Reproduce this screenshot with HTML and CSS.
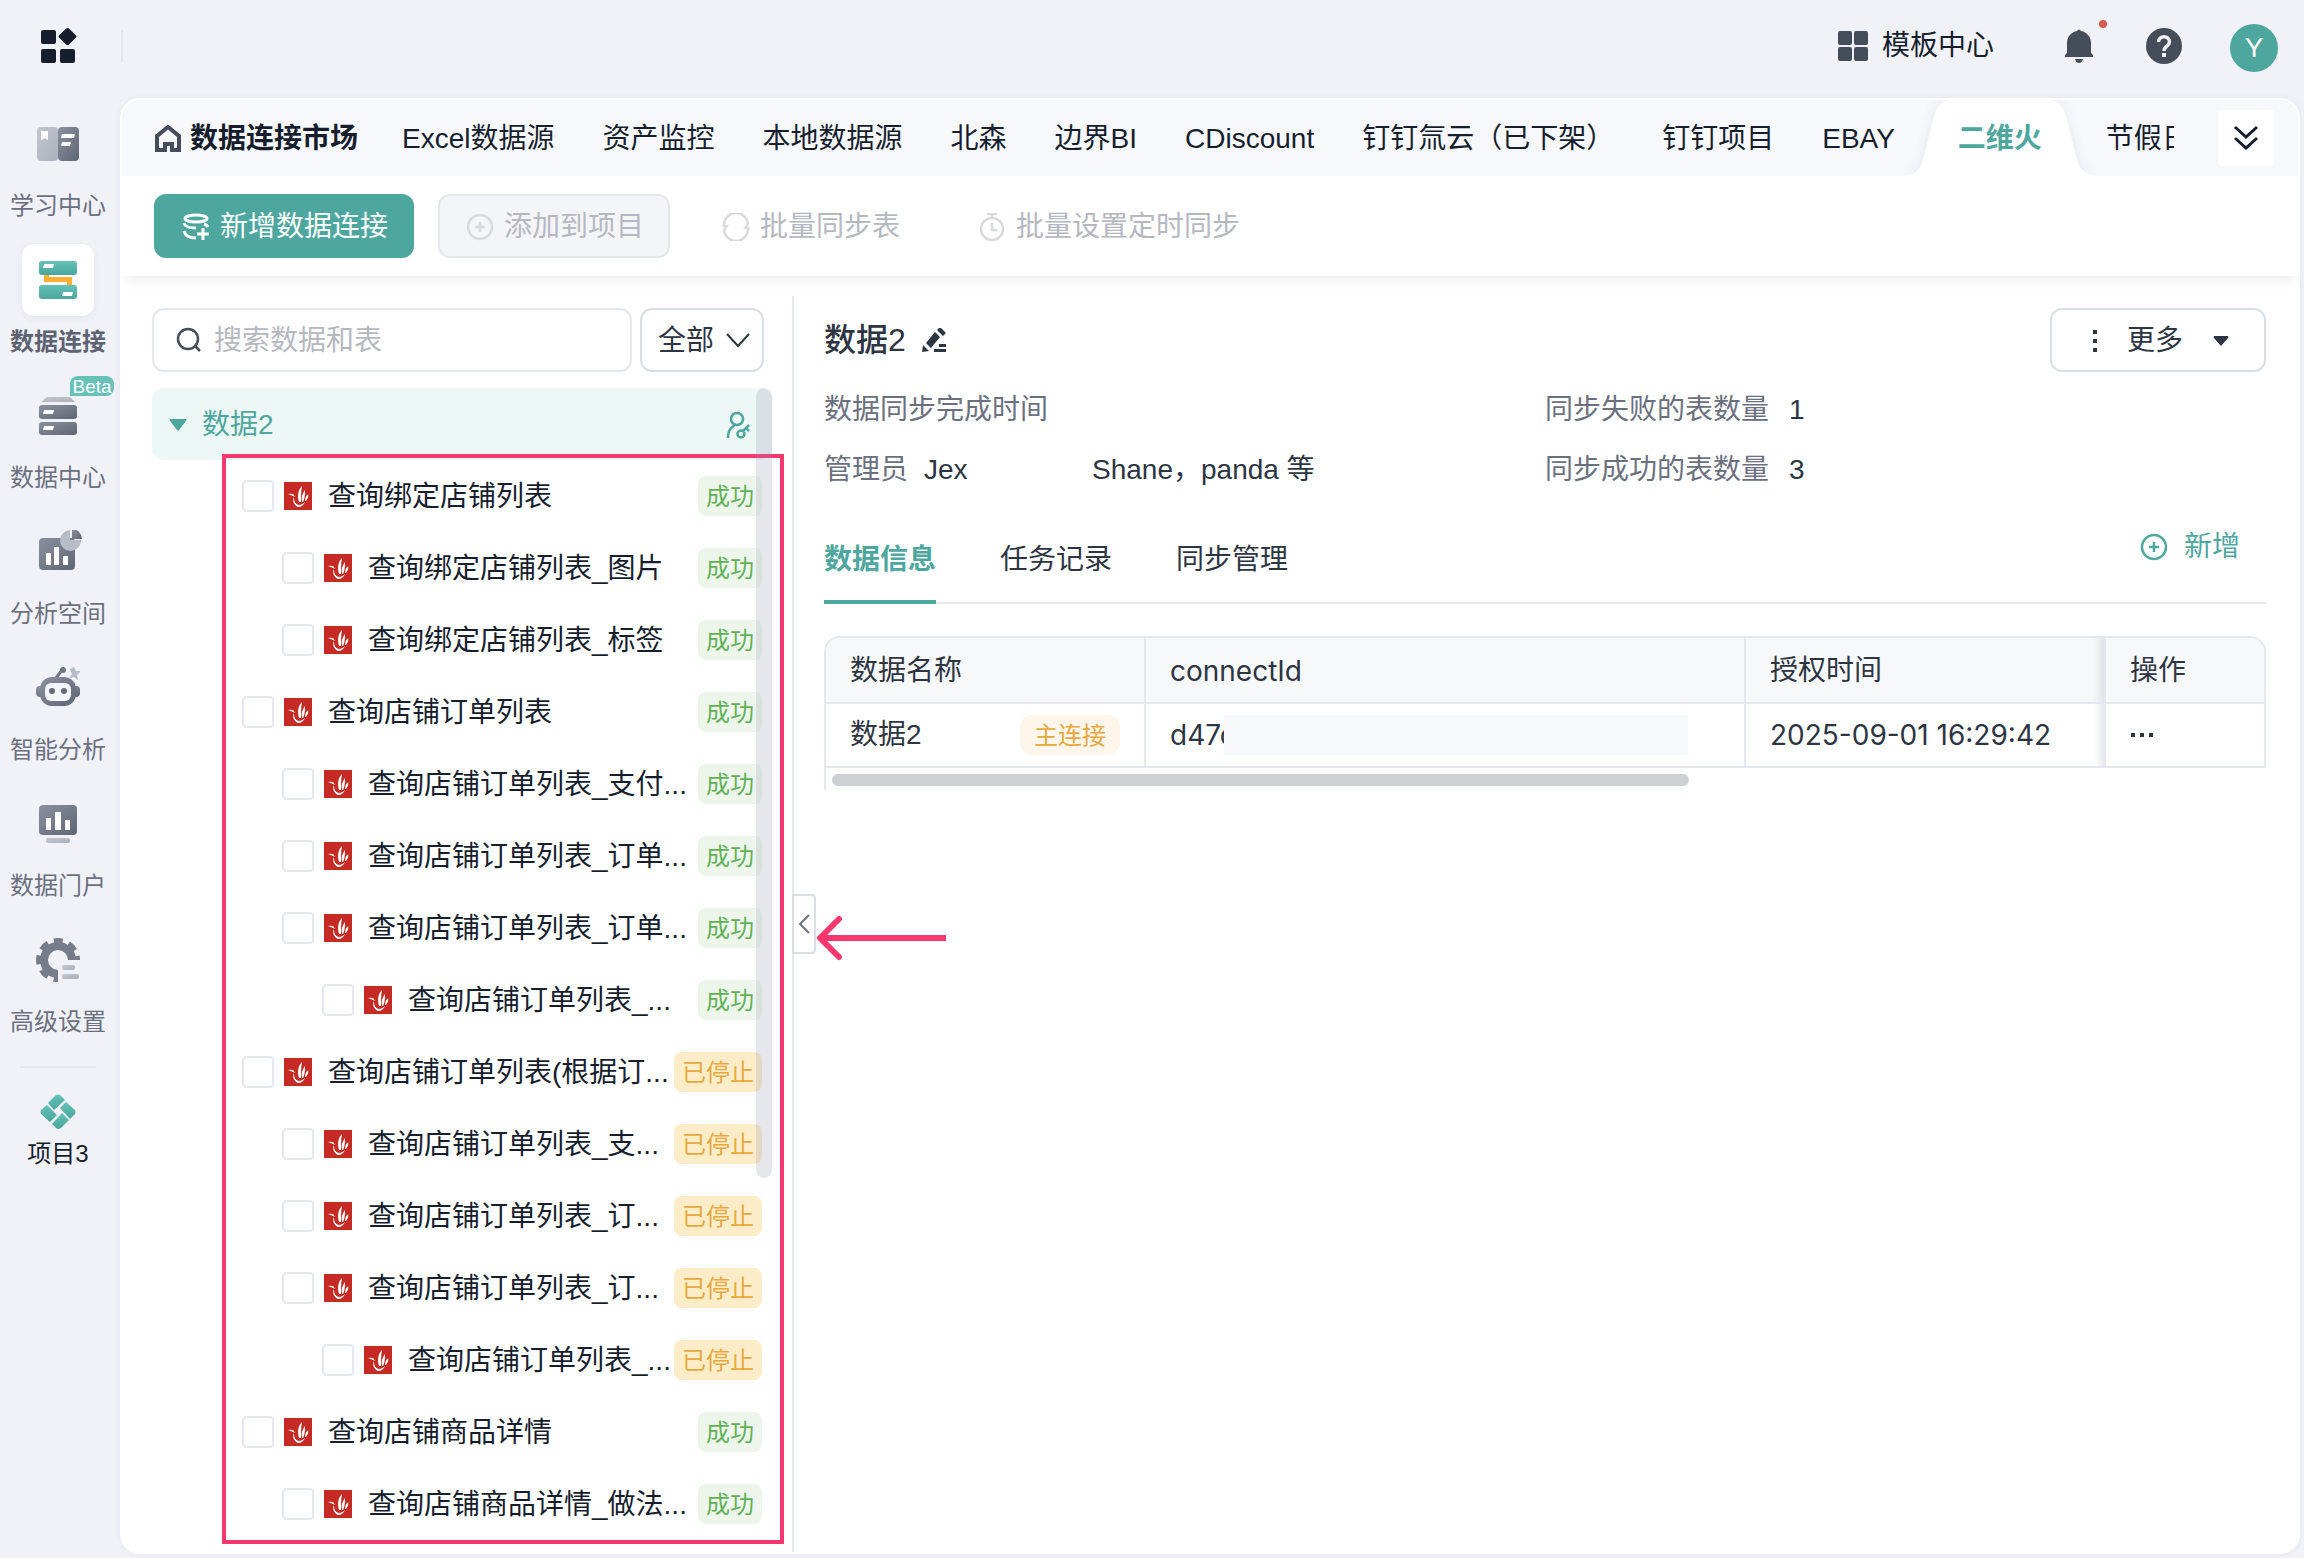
FILE: index.html
```html
<!DOCTYPE html>
<html lang="zh-CN">
<head>
    <meta charset="UTF-8">
    <meta name="viewport" content="width=device-width, initial-scale=1.0">
    <title>数据连接</title>
    <link rel="stylesheet" href="styles.css">
</head>
<body>
    <!-- shared svg parts -->
    <svg class="defs" aria-hidden="true">
        <defs>
            <linearGradient id="dark" x1="0" y1="0" x2="1" y2="1">
                <stop offset="0" stop-color="#8b919e"/>
                <stop offset="1" stop-color="#5f6574"/>
            </linearGradient>
            <linearGradient id="light" x1="0" y1="0" x2="1" y2="1">
                <stop offset="0" stop-color="#c3c7d0"/>
                <stop offset="1" stop-color="#abb0bb"/>
            </linearGradient>
            <linearGradient id="teal" x1="0" y1="0" x2="0" y2="1">
                <stop offset="0" stop-color="#63c2b9"/>
                <stop offset="1" stop-color="#4ba69d"/>
            </linearGradient>
        </defs>
        <symbol id="fire" viewBox="0 0 28 28">
            <rect width="28" height="28" fill="#c52a24"/>
            <path d="M4 12c4-1 6 0 7 3-2-1-4-2-7-3z" fill="#fff"/>
            <path d="M10 15c-2 4 0 8 4 10 3 0 6-2 7-5-2 2-4 3-6 3-4-1-5-4-5-8z" fill="#fff"/>
            <path d="M15 20c-2-6-1-12 3-16-1 5-1 10-1 16z" fill="#fff"/>
            <path d="M18 20c-1-4 0-8 3-12 0 4 0 8-2 12zM21 19c0-3 1-5 3-7 1 3-1 5-2 7z" fill="#fff"/>
        </symbol>
        <symbol id="plus-circle" viewBox="0 0 28 28">
            <circle cx="14" cy="14" r="12" fill="none" stroke="currentColor" stroke-width="2.500"/>
            <path d="M14 9v10M9 14h10" stroke="currentColor" stroke-width="2.500"/>
        </symbol>
    </svg>

    <header class="topbar">
        <a href="#" class="logo" aria-label="首页">
            <svg width="36" height="36" viewBox="0 1 36 36" fill="#161e2e">
                <rect x="0" y="3" width="15" height="14" rx="2"/>
                <rect x="0" y="22" width="15" height="14" rx="2"/>
                <rect x="19" y="22" width="15" height="14" rx="2"/>
                <path d="M25 1.500q2-1 3 0l7 7q1 1 0 2l-7 7q-1.500 1-3 0l-7-7q-1-1 0-2z"/>
            </svg>
        </a>
        <div class="top-actions">
            <a href="#" class="template-link">
                <svg width="30" height="30" viewBox="0 0 30 30" fill="#454d5b">
                    <rect width="14" height="14" rx="2"/><rect x="16" width="14" height="14" rx="2"/>
                    <rect y="16" width="14" height="14" rx="2"/><rect x="16" y="16" width="14" height="14" rx="2"/>
                </svg>
                模板中心
            </a>
            <button class="icon-btn bell" aria-label="通知">
                <svg width="30" height="34" viewBox="0 0 30 34" fill="#454d5b">
                    <path d="M13 2q2-3 4 0c6 1 10 6 10 12v10l2 2v2H1v-2l2-2V14C3 8 7 3 13 2z"/>
                    <path d="M11 30h8q-1 4-4 4t-4-4z"/>
                </svg>
                <span class="dot"></span>
            </button>
            <button class="icon-btn help" aria-label="帮助">
                <svg width="36" height="36" viewBox="0 0 36 36">
                    <circle cx="18" cy="18" r="18" fill="#454d5b"/>
                    <path d="M12.500 14c0-7 11-7 11 0 0 4-5.500 4-5.500 9" fill="none" stroke="#f1f2f8" stroke-width="3.500"/>
                    <rect x="16" y="25" width="4" height="4" fill="#f1f2f8"/>
                </svg>
            </button>
            <button class="avatar">Y</button>
        </div>
    </header>

    <div class="layout">
        <!-- left menu -->
        <nav class="menu">
            <a href="#" class="menu-item">
                <span class="menu-icon">
                    <svg width="44" height="44" viewBox="0 0 44 44">
                        <rect x="1" y="5" width="21" height="34" rx="4" fill="url(#light)"/>
                        <rect x="22" y="5" width="21" height="34" rx="4" fill="url(#dark)"/>
                        <path d="M5 9h7v9l-3-2-4 2zM26 12h13l-1 4H25zM26 20h9l-1 4h-9z" fill="#fff"/>
                    </svg>
                </span>
                学习中心
            </a>
            <a href="#" class="menu-item active">
                <span class="menu-icon">
                    <svg width="44" height="44" viewBox="0 0 44 44">
                        <path d="M10.500 16v5.500h23V30" fill="none" stroke="#fbb034" stroke-width="5"/>
                        <rect x="3" y="3" width="38" height="14" rx="3" fill="url(#teal)"/>
                        <rect x="3" y="27" width="38" height="14" rx="3" fill="url(#teal)"/>
                        <path d="M8 6h10l-1 4H7zM27 34h10l-1 4H26z" fill="#fff"/>
                    </svg>
                </span>
                数据连接
            </a>
            <a href="#" class="menu-item">
                <span class="menu-icon">
                    <svg width="44" height="44" viewBox="0 0 44 44">
                        <path d="M11 3h23l5 5H5z" fill="url(#light)"/>
                        <rect x="3" y="11" width="38" height="14" rx="3" fill="url(#dark)"/>
                        <rect x="3" y="28" width="38" height="13" rx="3" fill="url(#dark)"/>
                        <path d="M8 16h10l-1 4H7zM8 32h10l-1 4H7z" fill="#fff"/>
                    </svg>
                    <span class="beta">Beta</span>
                </span>
                数据中心
            </a>
            <a href="#" class="menu-item">
                <span class="menu-icon">
                    <svg width="48" height="44" viewBox="-2 0 48 44">
                        <rect x="3" y="8" width="36" height="32" rx="4" fill="url(#dark)"/>
                        <path d="M10 23h5v12h-5zM18 17h5v18h-5zM27 26h5v9h-5z" fill="#fff"/>
                        <path d="M34 0v10h11a10.500 10.500 0 1 1-11-10z" fill="#b8bcc6"/>
                        <path d="M36-1a10 10 0 0 1 10 10H36z" fill="url(#dark)"/>
                    </svg>
                </span>
                分析空间
            </a>
            <a href="#" class="menu-item">
                <span class="menu-icon">
                    <svg width="44" height="44" viewBox="0 0 44 44">
                        <path d="M20 12l6-8" stroke="#6f7584" stroke-width="3"/>
                        <circle cx="27" cy="4" r="3" fill="#6f7584"/>
                        <path d="M38 1l2 4 5 0-4 4 1 5-4-3-5 1 3-4-2-5z" fill="#b4bcc8"/>
                        <rect x="0" y="20" width="44" height="11" rx="4" fill="url(#dark)"/>
                        <rect x="4" y="11" width="36" height="29" rx="12" fill="url(#dark)"/>
                        <rect x="9" y="17" width="26" height="18" rx="6" fill="#f4f5f8"/>
                        <circle cx="16" cy="25" r="3" fill="#646a79"/><circle cx="28" cy="25" r="3" fill="#646a79"/>
                    </svg>
                </span>
                智能分析
            </a>
            <a href="#" class="menu-item">
                <span class="menu-icon">
                    <svg width="44" height="44" viewBox="0 0 44 44">
                        <rect x="3" y="3" width="38" height="30" rx="4" fill="url(#dark)"/>
                        <path d="M10 16h5v12h-5zM19 10h6v18h-6zM29 18h5v10h-5z" fill="#fff"/>
                        <rect x="10" y="36" width="24" height="5" rx="2" fill="url(#light)"/>
                    </svg>
                </span>
                数据门户
            </a>
            <a href="#" class="menu-item">
                <span class="menu-icon">
                    <svg width="44" height="44" viewBox="0 0 44 44">
                        <path d="M22 36A14 14 0 1 1 36 22" fill="none" stroke="#767c8a" stroke-width="8"/>
                        <path d="M22 41.500A19.500 19.500 0 1 1 41.500 22" fill="none" stroke="#767c8a" stroke-width="5" stroke-dasharray="4.500 6.300 9 6.300 9 6.300 9 6.300 9 6.300 9 6.300 5"/>
                        <rect x="26" y="27" width="13" height="5" rx="2" fill="url(#light)"/>
                        <rect x="26" y="36" width="17" height="5" rx="2" fill="url(#light)"/>
                    </svg>
                </span>
                高级设置
            </a>
            <hr>
            <a href="#" class="project">
                <svg width="36" height="36" viewBox="0 0 36 36" fill="url(#teal)">
                    <path d="M8 9l8-8q2-1 4 0l5 5-11 10z"/>
                    <path d="M26 8l9 8q1 2 0 4l-5 5-10-11z"/>
                    <path d="M29 26l-8 8q-3 2-5 0l-4-4 10-11z"/>
                    <path d="M10 28l-9-8q-1-2 0-4l6-5 10 10z"/>
                </svg>
                项目3
            </a>
        </nav>

        <main class="panel">
            <!-- data source tabs -->
            <div class="source-bar">
                <nav class="source-tabs">
                    <a href="#" class="market">
                        <svg width="28" height="28" viewBox="0 0 28 28">
                            <path d="M3 25V11l11-9 11 9v14h-7v-6h-7v6z" fill="none" stroke="#454d5b" stroke-width="4"/>
                        </svg>
                        数据连接市场
                    </a>
                    <a href="#">Excel数据源</a>
                    <a href="#">资产监控</a>
                    <a href="#">本地数据源</a>
                    <a href="#">北森</a>
                    <a href="#">边界BI</a>
                    <a href="#">CDiscount</a>
                    <a href="#">钉钉氚云（已下架）</a>
                    <a href="#">钉钉项目</a>
                    <a href="#">EBAY</a>
                    <a href="#" class="current">
                        <svg class="tab-shape" width="200" height="76" viewBox="0 0 200 76">
                            <path d="M0 76C14 76 20 70 23 60L34 16C37 5 42 0 54 0H146C158 0 163 5 166 16L177 60C180 70 186 76 200 76z" fill="#fff"/>
                        </svg>
                        <span>二维火</span>
                    </a>
                    <a href="#">节假日</a>
                </nav>
                <button class="more-tabs" aria-label="展开">
                    <svg width="26" height="26" viewBox="0 0 26 26" fill="none" stroke="#161e2e" stroke-width="3">
                        <path d="M2 2l11 10L24 2M2 13l11 10 11-10"/>
                    </svg>
                </button>
            </div>

            <!-- toolbar -->
            <div class="toolbar">
                <button class="btn primary">
                    <svg width="28" height="28" viewBox="0 0 28 28" fill="none" stroke="#fff" stroke-width="3">
                        <ellipse cx="14" cy="5.500" rx="11" ry="3.500"/>
                        <path d="M2 10c1 4 5 5 12 5M22 11q3 1 4 3M2 18c1 5 5 7 12 7M21 15v12M15 21h12"/>
                    </svg>
                    新增数据连接
                </button>
                <button class="btn outlined" disabled>
                    <svg width="28" height="28"><use href="#plus-circle"/></svg>
                    添加到项目
                </button>
                <button class="btn plain" disabled>
                    <svg width="28" height="28" viewBox="0 0 28 28" fill="none" stroke="currentColor" stroke-width="2.500">
                        <path d="M2 12a12 12 0 0 1 24 0M26 16a12 12 0 0 1-24 0"/>
                        <path d="M0 12h7l-4 5zM28 16h-7l4-5z" fill="currentColor" stroke="none"/>
                    </svg>
                    批量同步表
                </button>
                <button class="btn plain" disabled>
                    <svg width="28" height="28" viewBox="0 0 28 28" fill="none" stroke="currentColor" stroke-width="2.500">
                        <circle cx="14" cy="16" r="11"/>
                        <path d="M9 1h10M14 1v4M14 10v7h5"/>
                    </svg>
                    批量设置定时同步
                </button>
            </div>

            <div class="content">
                <!-- tree -->
                <aside class="tree-pane">
                    <div class="search-row">
                        <label class="search">
                            <svg width="26" height="26" viewBox="0 0 26 26" fill="none" stroke="#454d5b" stroke-width="2.500">
                                <circle cx="12" cy="12" r="10"/><path d="M19 19l5 5"/>
                            </svg>
                            <input type="text" placeholder="搜索数据和表" aria-label="搜索数据和表">
                        </label>
                        <div class="filter">
                            <select aria-label="状态"><option>全部</option></select>
                            <svg width="24" height="16" viewBox="0 0 24 16" fill="none" stroke="#2d3543" stroke-width="2">
                                <path d="M1 2l11 12L23 2"/>
                            </svg>
                        </div>
                    </div>
                    <div class="tree">
                        <div class="tree-root">
                            <svg width="18" height="12" viewBox="0 0 18 12" fill="#4ea79f"><path d="M1 0h16q1 1 0 2L10 11q-1 1-2 0L1 2q-1-1 0-2z"/></svg>
                            <span>数据2</span>
                            <svg class="key" width="24" height="28" viewBox="0 0 24 28" fill="none" stroke="#4ea79f" stroke-width="2.500">
                                <circle cx="11" cy="8" r="6"/><path d="M2 27c0-7 2-10 7-13"/>
                                <circle cx="15" cy="23" r="3.500"/><path d="M17 20l6-6M20 17l3 3"/>
                            </svg>
                        </div>
                        <div class="tree-list">
                            <label class="node"><input type="checkbox"><svg><use href="#fire"/></svg><span class="name">查询绑定店铺列表</span><span class="tag ok">成功</span></label>
                            <label class="node l1"><input type="checkbox"><svg><use href="#fire"/></svg><span class="name">查询绑定店铺列表_图片</span><span class="tag ok">成功</span></label>
                            <label class="node l1"><input type="checkbox"><svg><use href="#fire"/></svg><span class="name">查询绑定店铺列表_标签</span><span class="tag ok">成功</span></label>
                            <label class="node"><input type="checkbox"><svg><use href="#fire"/></svg><span class="name">查询店铺订单列表</span><span class="tag ok">成功</span></label>
                            <label class="node l1"><input type="checkbox"><svg><use href="#fire"/></svg><span class="name">查询店铺订单列表_支付...</span><span class="tag ok">成功</span></label>
                            <label class="node l1"><input type="checkbox"><svg><use href="#fire"/></svg><span class="name">查询店铺订单列表_订单...</span><span class="tag ok">成功</span></label>
                            <label class="node l1"><input type="checkbox"><svg><use href="#fire"/></svg><span class="name">查询店铺订单列表_订单...</span><span class="tag ok">成功</span></label>
                            <label class="node l2"><input type="checkbox"><svg><use href="#fire"/></svg><span class="name">查询店铺订单列表_...</span><span class="tag ok">成功</span></label>
                            <label class="node"><input type="checkbox"><svg><use href="#fire"/></svg><span class="name">查询店铺订单列表(根据订...</span><span class="tag stop">已停止</span></label>
                            <label class="node l1"><input type="checkbox"><svg><use href="#fire"/></svg><span class="name">查询店铺订单列表_支...</span><span class="tag stop">已停止</span></label>
                            <label class="node l1"><input type="checkbox"><svg><use href="#fire"/></svg><span class="name">查询店铺订单列表_订...</span><span class="tag stop">已停止</span></label>
                            <label class="node l1"><input type="checkbox"><svg><use href="#fire"/></svg><span class="name">查询店铺订单列表_订...</span><span class="tag stop">已停止</span></label>
                            <label class="node l2"><input type="checkbox"><svg><use href="#fire"/></svg><span class="name">查询店铺订单列表_...</span><span class="tag stop">已停止</span></label>
                            <label class="node"><input type="checkbox"><svg><use href="#fire"/></svg><span class="name">查询店铺商品详情</span><span class="tag ok">成功</span></label>
                            <label class="node l1"><input type="checkbox"><svg><use href="#fire"/></svg><span class="name">查询店铺商品详情_做法...</span><span class="tag ok">成功</span></label>
                            <div class="mark-box"></div>
                        </div>
                        <div class="tree-scroll"></div>
                    </div>
                </aside>

                <!-- detail -->
                <section class="detail">
                    <button class="collapse" aria-label="收起">
                        <svg width="12" height="20" viewBox="0 0 12 20" fill="none" stroke="#6b7280" stroke-width="2"><path d="M11 1L2 10l9 9"/></svg>
                    </button>
                    <svg class="mark-arrow" width="130" height="46" viewBox="0 0 130 46" fill="none" stroke="#f7386f" stroke-width="6">
                        <path d="M4 23h126"/><path d="M23 4L4 23l19 19" stroke-linecap="round" stroke-linejoin="round"/>
                    </svg>

                    <div class="title-row">
                        <h1>数据2</h1>
                        <button class="icon-btn" aria-label="编辑">
                            <svg width="24" height="24" viewBox="0 0 24 24" fill="#2d3543">
                                <path d="M13 4l5 5L9 20 4 15zM15 2l2-2q1-1 2 0l4 4q1 1 0 2l-2 2zM1 17l6 6-7 1zM17 16h7v3h-7zM12 21h12v3H12z"/>
                            </svg>
                        </button>
                        <button class="more">
                            <svg width="4" height="22" viewBox="0 0 4 22" fill="#2d3543"><path d="M0 0h4v4H0zM0 9h4v4H0zM0 18h4v4H0z"/></svg>
                            更多
                            <svg width="16" height="10" viewBox="0 0 16 10" fill="#2d3543"><path d="M1 0h14q1 1 0 2L8 10 1 2q-1-1 0-2z"/></svg>
                        </button>
                    </div>
                    <div class="info">
                        <p>数据同步完成时间</p>
                        <p>同步失败的表数量<b>1</b></p>
                        <p>管理员<b class="first-admin">Jex</b><b>Shane，panda 等</b></p>
                        <p>同步成功的表数量<b>3</b></p>
                    </div>
                    <div class="tabs">
                        <a href="#" class="on">数据信息</a>
                        <a href="#">任务记录</a>
                        <a href="#">同步管理</a>
                        <button class="add">
                            <svg width="28" height="28"><use href="#plus-circle"/></svg>
                            新增
                        </button>
                    </div>
                    <div class="table-wrap">
                        <table>
                            <thead>
                                <tr>
                                    <th class="col-name">数据名称</th>
                                    <th><span class="latin">connectId</span></th>
                                    <th class="col-time">授权时间</th>
                                    <th class="col-op">操作</th>
                                </tr>
                            </thead>
                            <tbody>
                                <tr>
                                    <td><div class="name-cell">数据2<span class="tag main">主连接</span></div></td>
                                    <td><div class="id-cell"><span class="latin">d47c</span><span class="masked"></span></div></td>
                                    <td class="col-time"><span class="latin">2025-09-01 16:29:42</span></td>
                                    <td class="col-op"><button class="icon-btn" aria-label="操作">
                                        <svg width="24" height="4" viewBox="0 0 24 4" fill="#2d3543"><path d="M1 0h4v4H1zM10 0h4v4h-4zM19 0h4v4h-4z"/></svg>
                                    </button></td>
                                </tr>
                            </tbody>
                        </table>
                        <div class="h-scroll"></div>
                    </div>
                </section>
            </div>
        </main>
    </div>
</body>
</html>
```
FILE: styles.css
```css
* {
    box-sizing: border-box;
}

body {
    margin: 0;
    height: 100vh;
    display: flex;
    flex-direction: column;
    overflow: hidden;
    background: #f1f2f8;
    color: #161e2e;
    font-family: "Liberation Sans", "Noto Sans CJK SC", sans-serif;
    font-size: 28px;
    line-height: 40px;
}

a {
    color: inherit;
    text-decoration: none;
}

button, input, select {
    font: inherit;
    color: inherit;
    margin: 0;
    padding: 0;
    border: none;
    background: none;
}

svg {
    flex: none;
    display: block;
}

.defs {
    position: absolute;
    width: 0;
    height: 0;
}

.icon-btn {
    display: flex;
}

.latin {
    font-family: Inter, sans-serif;
}

/* Top bar */
.topbar {
    flex: none;
    height: 98px;
    display: flex;
    justify-content: space-between;
    padding: 0 26px 0 41px;
}

.logo {
    width: 82px;
    height: 32px;
    margin-top: 30px;
    border-right: 2px solid #e5e7ee;
    display: flex;
    align-items: center;
}

.top-actions {
    height: 92px;
    display: flex;
    align-items: center;
}

.template-link {
    display: flex;
    align-items: center;
    gap: 14px;
}

.bell {
    position: relative;
    margin-left: 70px;
}

.dot {
    position: absolute;
    top: -9px;
    right: -13px;
    width: 8px;
    height: 8px;
    border-radius: 50%;
    background: #db5850;
}

.help {
    margin-left: 52px;
}

.avatar {
    width: 48px;
    height: 48px;
    margin: 4px 0 0 48px;
    border-radius: 50%;
    background: #4ea79f;
    color: #fff;
}

/* Left menu */
.layout {
    flex: 1;
    min-height: 0;
    display: flex;
    padding: 0 4px 4px 0;
}

.menu {
    flex: none;
    width: 120px;
    padding: 10px 4px 0 0;
    display: flex;
    flex-direction: column;
    align-items: center;
    font-size: 24px;
    line-height: 28px;
    color: #6b7080;
}

.menu-item {
    display: flex;
    flex-direction: column;
    align-items: center;
    gap: 12px;
    margin-bottom: 24px;
}

.menu-icon {
    position: relative;
    width: 72px;
    height: 72px;
    display: flex;
    align-items: center;
    justify-content: center;
    border-radius: 12px;
}

.menu-item.active {
    font-weight: bold;
    color: #5d6372;
}

.active .menu-icon {
    background: #fff;
    box-shadow: 0 2px 8px rgba(30, 40, 80, 0.06);
}

.beta {
    position: absolute;
    top: -4px;
    left: 48px;
    width: 44px;
    height: 20px;
    border-radius: 8px 8px 8px 0;
    background: #66c2b9;
    color: #fff;
    font-size: 19px;
    line-height: 22px;
    text-align: center;
}

.menu hr {
    width: 76px;
    margin: 6px 0 26px;
    border: none;
    border-top: 2px solid #e5e7ee;
}

.project {
    display: flex;
    flex-direction: column;
    align-items: center;
    gap: 10px;
    color: #161e2e;
}

/* Main panel */
.panel {
    flex: 1;
    min-width: 0;
    display: flex;
    flex-direction: column;
    border: 2px solid #fff;
    border-radius: 20px;
    background: #fff;
    box-shadow: 0 0 6px rgba(30, 40, 80, 0.06);
    overflow: hidden;
}

.source-bar {
    flex: none;
    height: 76px;
    display: flex;
    align-items: center;
    justify-content: space-between;
    padding: 0 24px 0 32px;
    background: #f7f8fc;
}

.source-tabs {
    flex: 1;
    min-width: 0;
    height: 76px;
    margin-right: 44px;
    padding-top: 2px;
    display: flex;
    align-items: center;
    gap: 48px;
    white-space: nowrap;
    overflow: hidden;
}

.market {
    display: flex;
    align-items: center;
    gap: 8px;
    margin-right: -4px;
    font-weight: bold;
}

.current {
    position: relative;
    margin: 0 16px 0 15px;
    font-weight: bold;
    color: #4ea79f;
}

.current span {
    position: relative;
}

.tab-shape {
    position: absolute;
    top: -19px;
    left: -58px;
    filter: drop-shadow(0 0 6px rgba(30, 40, 80, 0.08));
}

.more-tabs {
    flex: none;
    width: 56px;
    height: 56px;
    display: flex;
    align-items: center;
    justify-content: center;
    border-radius: 4px;
    background: #fff;
}

.toolbar {
    flex: none;
    position: relative;
    height: 100px;
    display: flex;
    align-items: center;
    padding: 0 32px;
    background: #fff;
    box-shadow: 0 8px 12px -4px rgba(0, 0, 0, 0.08);
}

.btn {
    height: 64px;
    display: flex;
    align-items: center;
    gap: 10px;
    border-radius: 12px;
}

.primary {
    padding: 2px 26px 0 28px;
    background: #4ea79f;
    color: #fff;
}

.outlined {
    margin-left: 24px;
    padding: 2px 24px 0 26px;
    border: 2px solid #e5e7ee;
    background: #f4f5f8;
}

.plain {
    margin-left: 52px;
    padding-top: 2px;
}

.plain + .plain {
    margin-left: 78px;
}

.btn:disabled {
    color: #b5b8c0;
}

.btn:disabled svg {
    color: #d8dade;
}

.content {
    flex: 1;
    min-height: 0;
    display: flex;
}

/* Tree */
.tree-pane {
    flex: none;
    width: 672px;
    margin-top: 20px;
    padding: 12px 20px 0 30px;
    border-right: 2px solid #e5e7ee;
}

.search-row {
    display: flex;
    gap: 8px;
    margin: 0 8px 16px 0;
}

.search {
    flex: 1;
    min-width: 0;
    height: 64px;
    display: flex;
    align-items: center;
    gap: 12px;
    padding: 0 22px;
    border: 2px solid #e5e7ee;
    border-radius: 12px;
}

.search input {
    flex: 1;
    min-width: 0;
    padding-top: 2px;
    outline: none;
}

.search input::placeholder {
    color: #b5b8c0;
}

.filter {
    position: relative;
    width: 124px;
    height: 64px;
}

.filter select {
    width: 100%;
    height: 100%;
    padding: 2px 16px 0;
    appearance: none;
    border: 2px solid #dadee5;
    border-radius: 12px;
    color: #2d3543;
}

.filter svg {
    position: absolute;
    right: 14px;
    top: 24px;
    pointer-events: none;
}

.tree {
    position: relative;
}

.tree-root {
    height: 72px;
    display: flex;
    align-items: center;
    gap: 15px;
    padding: 2px 22px 0 17px;
    border-radius: 12px;
    background: #edf7f5;
    color: #4ea79f;
}

.key {
    margin-left: auto;
}

.tree-list {
    position: relative;
}

.node {
    height: 72px;
    display: flex;
    align-items: center;
    padding: 0 10px 0 90px;
}

.l1 {
    padding-left: 130px;
}

.l2 {
    padding-left: 170px;
}

.node input {
    appearance: none;
    flex: none;
    width: 32px;
    height: 32px;
    border: 2px solid #e5e7ee;
    border-radius: 4px;
    background: #fff;
}

.node svg {
    width: 28px;
    height: 28px;
    margin: 0 16px 0 10px;
}

.name {
    flex: 1;
    min-width: 0;
    padding-top: 2px;
    white-space: nowrap;
    overflow: hidden;
}

.tag {
    flex: none;
    height: 40px;
    padding: 0 8px;
    border-radius: 8px;
    font-size: 24px;
    line-height: 42px;
}

.ok {
    background: #eef6ec;
    color: #5fb257;
}

.stop {
    background: #fcedc8;
    color: #e8a840;
}

.tree-scroll {
    position: absolute;
    top: 0;
    right: 0;
    width: 16px;
    height: 790px;
    border-radius: 8px;
    background: rgba(140, 146, 172, 0.22);
}

/* Highlight frame around the table list */
.mark-box {
    position: absolute;
    top: -6px;
    right: -12px;
    bottom: -4px;
    left: 70px;
    border: 4px solid #f7386f;
    pointer-events: none;
}

/* Detail */
.detail {
    position: relative;
    flex: 1;
    min-width: 0;
    padding: 32px 32px 0 30px;
    color: #2d3543;
}

.collapse {
    position: absolute;
    top: 618px;
    left: -2px;
    width: 24px;
    height: 60px;
    display: flex;
    align-items: center;
    justify-content: center;
    border: 2px solid #dadee5;
    border-radius: 0 4px 4px 0;
    background: #fff;
}

.mark-arrow {
    position: absolute;
    top: 639px;
    left: 22px;
}

.title-row {
    height: 64px;
    display: flex;
    align-items: center;
    gap: 16px;
}

h1 {
    margin: 0;
    font-size: 32px;
    font-weight: 500;
}

.more {
    width: 216px;
    height: 64px;
    margin-left: auto;
    padding: 2px 0 0 6px;
    display: flex;
    align-items: center;
    justify-content: center;
    gap: 30px;
    border: 2px solid #dadee5;
    border-radius: 12px;
}

.info {
    display: grid;
    grid-template-columns: 1fr 1fr;
    row-gap: 20px;
    margin-top: 18px;
    color: #6b7080;
}

.info p {
    margin: 0;
}

.info b {
    margin-left: 20px;
    font-weight: normal;
    color: #2d3543;
}

.info .first-admin {
    display: inline-block;
    width: 148px;
    margin-left: 16px;
}

.tabs {
    height: 84px;
    margin-top: 30px;
    display: flex;
    gap: 64px;
    border-bottom: 2px solid #e5e7ee;
}

.tabs a {
    height: 84px;
    padding-top: 20px;
}

.tabs .on {
    border-bottom: 4px solid #4ea79f;
    font-weight: bold;
    color: #4ea79f;
}

.add {
    height: 40px;
    margin: 7px 26px 0 auto;
    display: flex;
    align-items: center;
    gap: 16px;
    color: #4ea79f;
}

.table-wrap {
    margin-top: 32px;
}

table {
    width: 100%;
    table-layout: fixed;
    border-collapse: separate;
    border-spacing: 0;
    border: 2px solid #e5e7ee;
    border-radius: 16px 16px 0 0;
}

th, td {
    height: 62px;
    padding: 0 24px;
    border-right: 2px solid #e5e7ee;
    text-align: left;
    font-weight: normal;
}

th {
    height: 66px;
    padding-top: 2px;
    border-bottom: 2px solid #e5e7ee;
    background: #f7f8fa;
}

th:first-child {
    border-top-left-radius: 14px;
}

th:last-child {
    border-top-right-radius: 14px;
}

th:last-child, td:last-child {
    border-right: none;
}

.col-name {
    width: 320px;
}

.col-time {
    width: 360px;
    box-shadow: inset -14px 0 12px -12px rgba(30, 40, 80, 0.16);
}

.col-op {
    width: 158px;
}

.name-cell, .id-cell {
    display: flex;
    align-items: center;
    justify-content: space-between;
}

.main {
    padding: 0 14px;
    border-radius: 12px;
    background: #fff6eb;
    color: #e8a840;
}

.id-cell .latin {
    width: 54px;
    overflow: hidden;
}

.masked {
    flex: 1;
    height: 40px;
    margin-right: 32px;
    background: #f7f8fa;
}

.h-scroll {
    height: 22px;
    padding: 6px;
    border-left: 2px solid #e5e7ee;
}

.h-scroll::before {
    content: "";
    display: block;
    width: 60%;
    height: 12px;
    border-radius: 6px;
    background: #cdd1d4;
}
```
